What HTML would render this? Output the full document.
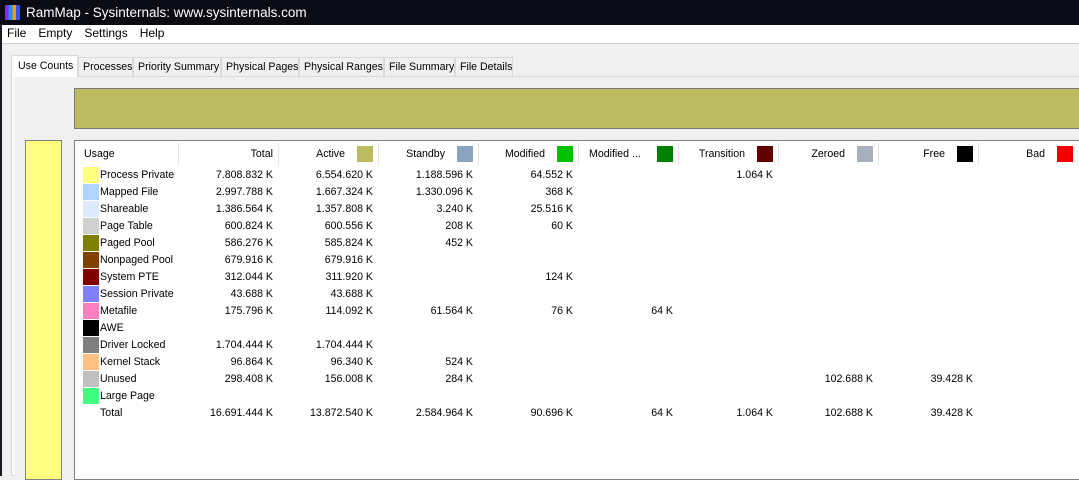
<!DOCTYPE html>
<html><head><style>
*{margin:0;padding:0;box-sizing:border-box}
body{width:1079px;height:476px;overflow:hidden;background:#f0f0f0;font-family:"Liberation Sans",sans-serif;font-size:10.6px;color:#000;position:relative}
.abs{position:absolute}
#title{left:0;top:0;width:1079px;height:25px;background:#0b0b16;color:#fff;font-size:13.5px;line-height:25px}
#menu{left:2px;top:25px;width:1077px;height:18px;background:#fff;font-size:12px;line-height:17px}
#menu span{margin-left:5px;margin-right:7px}
.tab{top:57px;height:19px;border:1px solid #d9d9d9;border-bottom:none;background:#f0f0f0;line-height:18px;padding:0 4px;font-size:10.6px;white-space:nowrap;overflow:hidden}
.tab.act{top:55px;height:22px;background:#fff;border-color:#d9d9d9;z-index:2;line-height:20px}
.cell{position:absolute;white-space:nowrap}
.r{text-align:right}
.sw{position:absolute;width:16px;height:16px}
.hs{position:absolute;width:16px;height:16px;top:146px}
.sep{position:absolute;top:143px;width:1px;height:22px;background:#e5e5e5}
</style></head><body>
<div class="abs" style="left:0;top:0;width:2px;height:476px;background:#1a1a22"></div>
<div id="title" class="abs"><span class="abs" style="left:5px;top:5px;width:15px;height:15px;background:linear-gradient(90deg,#8a2be2 0 25%,#1e90ff 25% 50%,#ff9900 50% 75%,#3050ff 75%)"></span><span style="margin-left:26px">RamMap - Sysinternals: www.sysinternals.com</span></div>
<div id="menu" class="abs"><span>File</span><span>Empty</span><span>Settings</span><span>Help</span></div>
<div class="abs" style="left:2px;top:43px;width:1077px;height:1px;background:#d0d0d0"></div>
<div class="abs" style="left:11px;top:76px;width:1068px;height:400px;background:#f8f8f8;border:1px solid #d9d9d9"></div>
<div class="abs" style="left:15px;top:77px;width:1064px;height:399px;background:#f0f0f0"></div>
<div class="abs tab act" style="left:11px;width:67px;padding-left:6px">Use Counts</div>
<div class="abs tab" style="left:78px;width:55px">Processes</div>
<div class="abs tab" style="left:133px;width:88px">Priority Summary</div>
<div class="abs tab" style="left:221px;width:78px">Physical Pages</div>
<div class="abs tab" style="left:299px;width:85px">Physical Ranges</div>
<div class="abs tab" style="left:384px;width:71px">File Summary</div>
<div class="abs tab" style="left:455px;width:58px">File Details</div>
<div class="abs" style="left:74px;top:88px;width:1005px;height:41px;background:#bdbb62;border:1px solid #7a7a7a;border-right:none"></div>
<div class="abs" style="left:25px;top:140px;width:37px;height:340px;background:#ffff80;border:1px solid #808080"></div>
<div class="abs" style="left:74px;top:140px;width:1005px;height:340px;background:#fff;border:1px solid #808080;border-right:none"></div>
<div class="sep" style="left:178px"></div><div class="sep" style="left:278px"></div><div class="sep" style="left:378px"></div><div class="sep" style="left:478px"></div><div class="sep" style="left:578px"></div><div class="sep" style="left:678px"></div><div class="sep" style="left:778px"></div><div class="sep" style="left:878px"></div><div class="sep" style="left:978px"></div>
<div class="cell" style="left:84px;top:148px">Usage</div>
<div class="cell r" style="left:180px;width:93px;top:148px">Total</div>
<div class="cell r" style="left:280px;width:65px;top:148px">Active</div>
<div class="cell r" style="left:380px;width:65px;top:148px">Standby</div>
<div class="cell r" style="left:480px;width:65px;top:148px">Modified</div>
<div class="cell" style="left:589px;top:148px">Modified ...</div>
<div class="cell r" style="left:680px;width:65px;top:148px">Transition</div>
<div class="cell r" style="left:780px;width:65px;top:148px">Zeroed</div>
<div class="cell r" style="left:880px;width:65px;top:148px">Free</div>
<div class="cell r" style="left:980px;width:65px;top:148px">Bad</div>
<div class="hs" style="left:357px;background:#bdbb62"></div>
<div class="hs" style="left:457px;background:#8aa3bf"></div>
<div class="hs" style="left:557px;background:#00c000"></div>
<div class="hs" style="left:657px;background:#008000"></div>
<div class="hs" style="left:757px;background:#600000"></div>
<div class="hs" style="left:857px;background:#a8b0bc"></div>
<div class="hs" style="left:957px;background:#000"></div>
<div class="hs" style="left:1057px;background:#ee0000"></div>
<div id="rows"></div>
<script>
var rows=[
["Process Private","#ffff80","7.808.832 K","6.554.620 K","1.188.596 K","64.552 K","","1.064 K","",""],
["Mapped File","#aed4ff","2.997.788 K","1.667.324 K","1.330.096 K","368 K","","","",""],
["Shareable","#dceafc","1.386.564 K","1.357.808 K","3.240 K","25.516 K","","","",""],
["Page Table","#d0d0d0","600.824 K","600.556 K","208 K","60 K","","","",""],
["Paged Pool","#808000","586.276 K","585.824 K","452 K","","","","",""],
["Nonpaged Pool","#804000","679.916 K","679.916 K","","","","","",""],
["System PTE","#800000","312.044 K","311.920 K","","124 K","","","",""],
["Session Private","#8080ff","43.688 K","43.688 K","","","","","",""],
["Metafile","#ff80c0","175.796 K","114.092 K","61.564 K","76 K","64 K","","",""],
["AWE","#000000","","","","","","","",""],
["Driver Locked","#808080","1.704.444 K","1.704.444 K","","","","","",""],
["Kernel Stack","#ffc080","96.864 K","96.340 K","524 K","","","","",""],
["Unused","#c0c0c0","298.408 K","156.008 K","284 K","","","","102.688 K","39.428 K"],
["Large Page","#40ff80","","","","","","","",""],
["Total","","16.691.444 K","13.872.540 K","2.584.964 K","90.696 K","64 K","1.064 K","102.688 K","39.428 K"]];
var h="";
rows.forEach(function(r,i){var y=167+i*17;
if(r[1])h+='<div class="sw" style="left:83px;top:'+(y)+'px;background:'+r[1]+'"></div>';
h+='<div class="cell" style="left:100px;top:'+(y+2)+'px">'+r[0]+'</div>';
for(var c=0;c<8;c++){h+='<div class="cell r" style="left:'+(178+c*100)+'px;width:95px;top:'+(y+2)+'px">'+r[c+2]+'</div>';}
});
document.getElementById("rows").innerHTML=h;
</script>
</body></html>
